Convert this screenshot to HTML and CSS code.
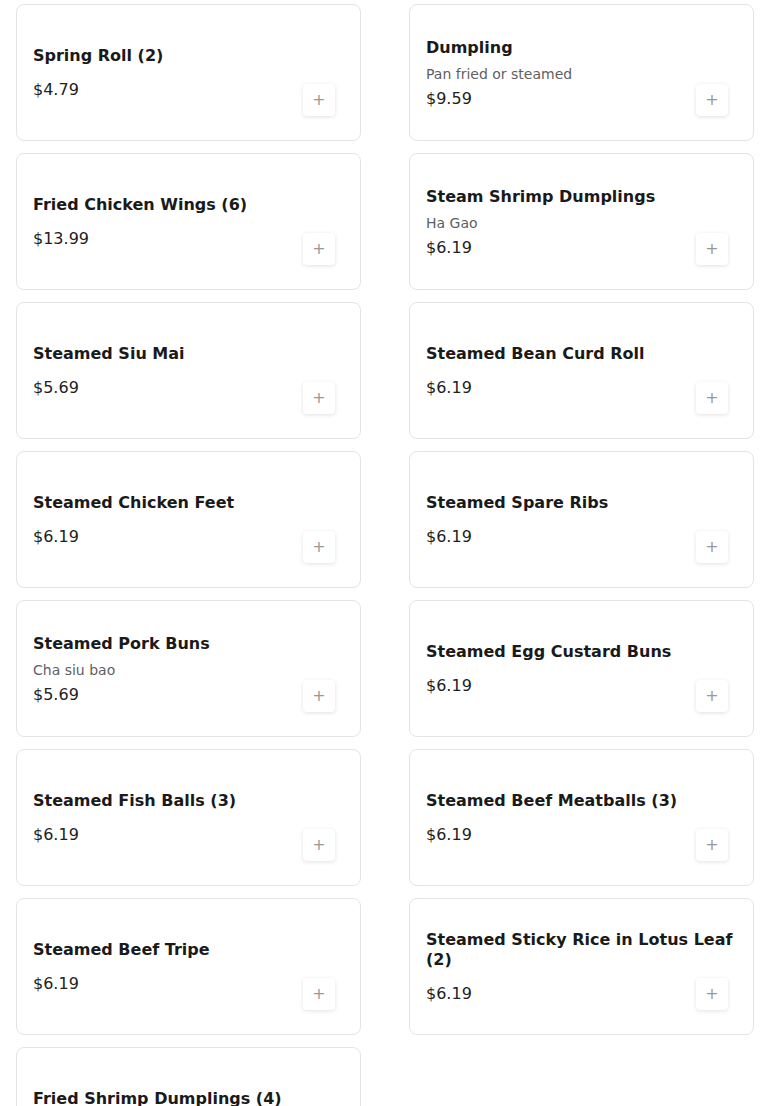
FILE: index.html
```html
<!DOCTYPE html>
<html lang="en">
<head>
    <meta charset="UTF-8">
    <meta name="viewport" content="width=device-width, initial-scale=1.0">
    <title>Menu</title>
    <link rel="stylesheet" href="styles.css">
</head>
<body>
    <div class="menu-grid">
        <div class="item-card">
            <div class="item-info">
                <div class="item-name">Spring Roll (2)</div>
                <div class="item-price">$4.79</div>
            </div>
            <button class="add-btn">+</button>
        </div>
        <div class="item-card">
            <div class="item-info">
                <div class="item-name">Dumpling</div>
                <div class="item-desc">Pan fried or steamed</div>
                <div class="item-price">$9.59</div>
            </div>
            <button class="add-btn">+</button>
        </div>
        <div class="item-card">
            <div class="item-info">
                <div class="item-name">Fried Chicken Wings (6)</div>
                <div class="item-price">$13.99</div>
            </div>
            <button class="add-btn">+</button>
        </div>
        <div class="item-card">
            <div class="item-info">
                <div class="item-name">Steam Shrimp Dumplings</div>
                <div class="item-desc">Ha Gao</div>
                <div class="item-price">$6.19</div>
            </div>
            <button class="add-btn">+</button>
        </div>
        <div class="item-card">
            <div class="item-info">
                <div class="item-name">Steamed Siu Mai</div>
                <div class="item-price">$5.69</div>
            </div>
            <button class="add-btn">+</button>
        </div>
        <div class="item-card">
            <div class="item-info">
                <div class="item-name">Steamed Bean Curd Roll</div>
                <div class="item-price">$6.19</div>
            </div>
            <button class="add-btn">+</button>
        </div>
        <div class="item-card">
            <div class="item-info">
                <div class="item-name">Steamed Chicken Feet</div>
                <div class="item-price">$6.19</div>
            </div>
            <button class="add-btn">+</button>
        </div>
        <div class="item-card">
            <div class="item-info">
                <div class="item-name">Steamed Spare Ribs</div>
                <div class="item-price">$6.19</div>
            </div>
            <button class="add-btn">+</button>
        </div>
        <div class="item-card">
            <div class="item-info">
                <div class="item-name">Steamed Pork Buns</div>
                <div class="item-desc">Cha siu bao</div>
                <div class="item-price">$5.69</div>
            </div>
            <button class="add-btn">+</button>
        </div>
        <div class="item-card">
            <div class="item-info">
                <div class="item-name">Steamed Egg Custard Buns</div>
                <div class="item-price">$6.19</div>
            </div>
            <button class="add-btn">+</button>
        </div>
        <div class="item-card">
            <div class="item-info">
                <div class="item-name">Steamed Fish Balls (3)</div>
                <div class="item-price">$6.19</div>
            </div>
            <button class="add-btn">+</button>
        </div>
        <div class="item-card">
            <div class="item-info">
                <div class="item-name">Steamed Beef Meatballs (3)</div>
                <div class="item-price">$6.19</div>
            </div>
            <button class="add-btn">+</button>
        </div>
        <div class="item-card">
            <div class="item-info">
                <div class="item-name">Steamed Beef Tripe</div>
                <div class="item-price">$6.19</div>
            </div>
            <button class="add-btn">+</button>
        </div>
        <div class="item-card">
            <div class="item-info">
                <div class="item-name">Steamed Sticky Rice in Lotus Leaf (2)</div>
                <div class="item-price">$6.19</div>
            </div>
            <button class="add-btn">+</button>
        </div>
        <div class="item-card">
            <div class="item-info">
                <div class="item-name">Fried Shrimp Dumplings (4)</div>
                <div class="item-price">$6.19</div>
            </div>
            <button class="add-btn">+</button>
        </div>
    </div>
</body>
</html>
```

FILE: styles.css
```css
body {
    font-family: "DejaVu Sans", Verdana, sans-serif;
    margin: 0;
    background-color: #fff;
    color: #1a1a1a;
}
.menu-grid {
    display: grid;
    grid-template-columns: 1fr 1fr;
    column-gap: 48px;
    row-gap: 12px;
    padding: 4px 16px 16px;
}
.item-card {
    position: relative;
    display: flex;
    align-items: center;
    height: 137px;
    box-sizing: border-box;
    padding: 3px 16px 0;
    border: 1px solid #e4e4e4;
    border-radius: 8px;
    background-color: #fff;
}
.item-info {
    flex: 1;
    min-width: 0;
}
.item-name {
    font-size: 16px;
    font-weight: bold;
    line-height: 20px;
    color: #1a1a1a;
}
.item-desc {
    margin-top: 6px;
    font-size: 14px;
    line-height: 20px;
    color: #5f5f5f;
}
.item-price {
    margin-top: 12px;
    font-size: 16px;
    line-height: 24px;
    color: #222;
}
.item-desc + .item-price {
    margin-top: 3px;
}
/* add button floats over the card corner */
.add-btn {
    position: absolute;
    right: 25px;
    bottom: 24px;
    width: 32px;
    height: 32px;
    padding: 0;
    border: none;
    border-radius: 4px;
    background-color: #fff;
    box-shadow: 0 1px 4px rgba(0, 0, 0, 0.12);
    color: #999;
    font-family: "DejaVu Sans", sans-serif;
    font-size: 16px;
    line-height: 32px;
    cursor: pointer;
}
```
